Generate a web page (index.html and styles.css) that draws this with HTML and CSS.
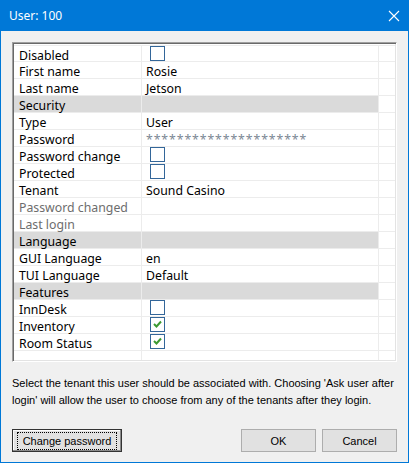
FILE: index.html
```html
<!DOCTYPE html>
<html>
<head>
<meta charset="utf-8">
<title>User: 100</title>
<link rel="stylesheet" href="styles.css">
</head>
<body>
<div class="window">
  <div class="titlebar">
    <span class="title">User: 100</span>
    <svg class="close" width="12" height="12" viewBox="0 0 12 12"><path d="M1 1 L11 11 M11 1 L1 11" stroke="#fff" stroke-width="1.1" fill="none"/></svg>
  </div>
  <div class="content">
    <div class="grid">
      <div class="rows">
        <div class="row"><div class="lbl">Disabled</div><div class="val"><span class="cb"></span></div><div class="pad"></div></div>
        <div class="row"><div class="lbl">First name</div><div class="val">Rosie</div><div class="pad"></div></div>
        <div class="row"><div class="lbl">Last name</div><div class="val">Jetson</div><div class="pad"></div></div>
        <div class="row section"><div class="lbl">Security</div><div class="val"></div><div class="pad"></div></div>
        <div class="row"><div class="lbl">Type</div><div class="val">User</div><div class="pad"></div></div>
        <div class="row"><div class="lbl">Password</div><div class="val pw">*********************</div><div class="pad"></div></div>
        <div class="row"><div class="lbl">Password change</div><div class="val"><span class="cb"></span></div><div class="pad"></div></div>
        <div class="row"><div class="lbl">Protected</div><div class="val"><span class="cb"></span></div><div class="pad"></div></div>
        <div class="row"><div class="lbl">Tenant</div><div class="val">Sound Casino</div><div class="pad"></div></div>
        <div class="row"><div class="lbl dis">Password changed</div><div class="val"></div><div class="pad"></div></div>
        <div class="row"><div class="lbl dis">Last login</div><div class="val"></div><div class="pad"></div></div>
        <div class="row section"><div class="lbl">Language</div><div class="val"></div><div class="pad"></div></div>
        <div class="row"><div class="lbl">GUI Language</div><div class="val">en</div><div class="pad"></div></div>
        <div class="row"><div class="lbl">TUI Language</div><div class="val">Default</div><div class="pad"></div></div>
        <div class="row section"><div class="lbl">Features</div><div class="val"></div><div class="pad"></div></div>
        <div class="row"><div class="lbl">InnDesk</div><div class="val"><span class="cb"></span></div><div class="pad"></div></div>
        <div class="row"><div class="lbl">Inventory</div><div class="val"><span class="cb"><svg width="13" height="13" viewBox="0 0 13 13"><path d="M3 6 L5.5 8.5 L10 3.5" stroke="#3c9a32" stroke-width="2" fill="none"/></svg></span></div><div class="pad"></div></div>
        <div class="row"><div class="lbl">Room Status</div><div class="val"><span class="cb"><svg width="13" height="13" viewBox="0 0 13 13"><path d="M3 6 L5.5 8.5 L10 3.5" stroke="#3c9a32" stroke-width="2" fill="none"/></svg></span></div><div class="pad"></div></div>
        <div class="row"><div class="lbl"></div><div class="val"></div><div class="pad"></div></div>
      </div>
    </div>
    <p class="help">Select the tenant this user should be associated with. Choosing 'Ask user after<br>login' will allow the user to choose from any of the tenants after they login.</p>
    <div class="buttons">
      <button class="btn default"><span class="focus">Change password</span></button>
      <span class="spacer"></span>
      <button class="btn">OK</button>
      <button class="btn">Cancel</button>
    </div>
  </div>
</div>
</body>
</html>
```
FILE: styles.css
```css
html, body {
  margin: 0;
  padding: 0;
  background: #f0f0f0;
}
.window {
  width: 409px;
  height: 463px;
  box-sizing: border-box;
  border: 1px solid #0078d7;
  border-top: none;
  background: #f0f0f0;
  font-family: "Noto Sans", "Open Sans", sans-serif;
  font-size: 12.3px;
  color: #000;
  overflow: hidden;
}
.titlebar {
  height: 31px;
  background: #0078d7;
  display: flex;
  align-items: center;
  padding: 0 9px 0 9px;
  margin: 0 -1px;
}
.title {
  color: #fff;
  font-size: 12px;
  flex: 1;
}
.close {
  display: block;
}
.content {
  padding: 11px 11px 0 11px;
}
.grid {
  width: 385px;
  height: 320px;
  box-sizing: border-box;
  border: 1px solid;
  border-color: #a0a0a0 #ffffff #ffffff #a0a0a0;
  box-shadow: inset 1px 1px 0 #696969, inset -1px -1px 0 #e3e3e3;
  padding: 1px;
  background: #fff;
}
.rows {
  height: 100%;
  overflow: hidden;
  background: #fff;
  padding-top: 1px;
  box-sizing: border-box;
}
.rows .row:first-child {
  border-top: 1px solid #ececec;
}
.row {
  display: grid;
  grid-template-columns: 128px 237px 17px;
  grid-template-rows: 16px;
  height: 17px;
  box-sizing: border-box;
  border-bottom: 1px solid #ececec;
}
.row > div {
  border-right: 1px solid #ececec;
  line-height: 16px;
  white-space: nowrap;
  box-sizing: border-box;
  height: 16px;
  padding-top: 2px;
}
.lbl {
  padding-left: 5px;
}
.val {
  padding-left: 4px;
}
.section .lbl,
.section .val {
  background: #dadada;
}
.dis {
  color: #6d6d6d;
}
.pw {
  color: #7b8794;
  letter-spacing: 0.9px;
}
.cb {
  display: block;
  width: 15px;
  height: 15px;
  box-sizing: border-box;
  border: 1px solid #336699;
  background: #fff;
  margin: -2px 0 0 4px;
}
.cb svg {
  display: block;
}
.help {
  margin: 13px 0 0 0;
  line-height: 17px;
  font-family: "Liberation Sans", Arial, sans-serif;
  font-size: 11px;
  white-space: nowrap;
  letter-spacing: 0;
}
.buttons {
  display: flex;
  gap: 6px;
  margin-top: 20px;
}
.spacer {
  flex: 1;
}
.btn {
  width: 75px;
  height: 23px;
  box-sizing: border-box;
  background: #e1e1e1;
  border: 1px solid #adadad;
  font-family: "Liberation Sans", Arial, sans-serif;
  font-size: 11px;
  color: #000;
  padding: 0;
  display: flex;
  align-items: center;
  justify-content: center;
  white-space: nowrap;
}
.btn.default {
  width: 110px;
  border: 1px solid #333;
  box-shadow: inset -1px -1px 0 #8a8a8a, inset 1px 1px 0 #fcfcfc;
}
.focus {
  outline: 1px dotted #000;
  padding: 1px 5px;
  line-height: 14px;
}
```
